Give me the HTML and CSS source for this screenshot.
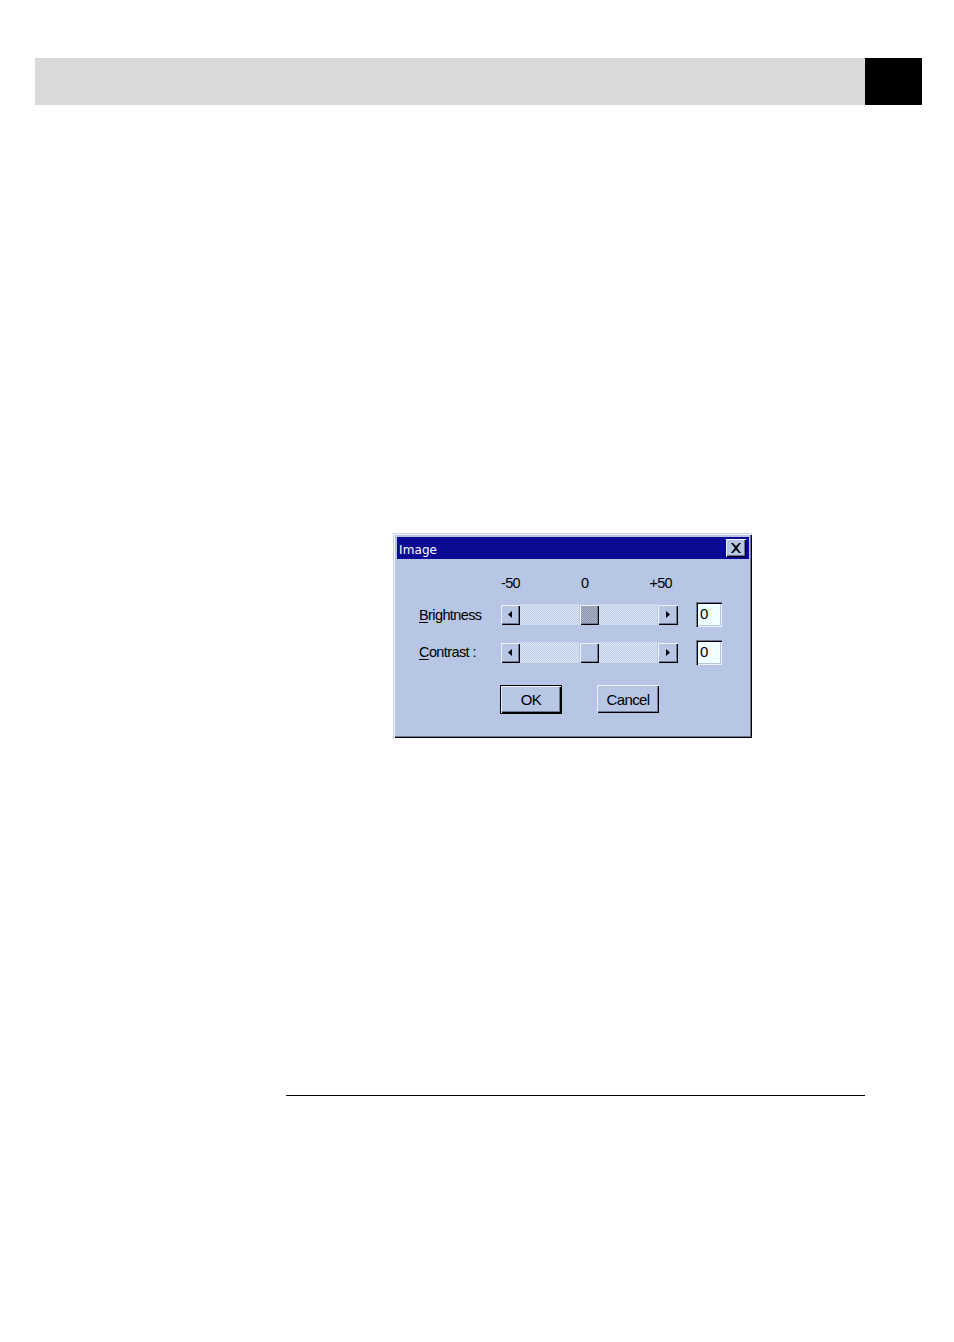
FILE: index.html
```html
<!DOCTYPE html>
<html>
<head>
<meta charset="utf-8">
<title>Image</title>
<link rel="stylesheet" href="styles.css">
</head>
<body>
<div class="page">
  <div class="header">
    <div class="header-gray"></div>
    <div class="header-black"></div>
  </div>

  <div class="dialog">
    <div class="titlebar">
      <span class="title">Image</span>
      <span class="close">
        <svg width="12" height="10" viewBox="0 0 12 10"><path d="M1 0h2l3 3.2L9 0h2L7.1 5 11 10H9L6 6.8 3 10H1l3.9-5z" fill="#000"/></svg>
      </span>
    </div>
    <div class="body">
      <div class="grid">
        <div></div>
        <div class="scale"><span>-50</span><span>0</span><span>+50</span></div>
        <div></div><div></div>

        <div class="label"><u>B</u>rightness</div>
        <div class="scroll">
          <span class="arrow"><svg width="4" height="7" viewBox="0 0 4 7"><path d="M4 0v7L0 3.5z" fill="#000"/></svg></span>
          <span class="track"></span>
          <span class="thumb focus"></span>
          <span class="track"></span>
          <span class="arrow"><svg width="4" height="7" viewBox="0 0 4 7"><path d="M0 0v7l4-3.5z" fill="#000"/></svg></span>
        </div>
        <div></div>
        <div class="edit">0</div>

        <div class="label"><u>C</u>ontrast :</div>
        <div class="scroll">
          <span class="arrow"><svg width="4" height="7" viewBox="0 0 4 7"><path d="M4 0v7L0 3.5z" fill="#000"/></svg></span>
          <span class="track"></span>
          <span class="thumb"></span>
          <span class="track"></span>
          <span class="arrow"><svg width="4" height="7" viewBox="0 0 4 7"><path d="M0 0v7l4-3.5z" fill="#000"/></svg></span>
        </div>
        <div></div>
        <div class="edit">0</div>
      </div>
      <div class="buttons">
        <div class="btn default">OK</div>
        <div class="btn">Cancel</div>
      </div>
    </div>
  </div>

  <div class="rule"></div>
</div>
</body>
</html>
```

FILE: styles.css
```css
html, body {
  margin: 0;
  padding: 0;
  background: #fff;
}
.page {
  padding-top: 58px;
  font-family: "Liberation Sans", Arial, sans-serif;
}
.header {
  display: flex;
  margin-left: 35px;
  height: 47px;
}
.header-gray {
  width: 830px;
  background: #d9d9d9;
}
.header-black {
  width: 57px;
  background: #000;
}

.dialog {
  box-sizing: border-box;
  margin-top: 428px;
  margin-left: 393px;
  width: 359px;
  height: 205px;
  padding: 4px 3px 4px 4px;
  background: #b7c6e4;
  box-shadow: inset 1px 1px 0 #c9d5ec, inset 2px 2px 0 #eef2fb,
              inset -1px -1px 0 #000, inset -2px -2px 0 #6f7a92;
}
.titlebar {
  height: 22px;
  background: #0b0b96;
  display: flex;
  align-items: center;
  justify-content: space-between;
  padding: 0 3px 0 2px;
}
.title {
  color: #fff;
  font-family: "DejaVu Sans", Verdana, sans-serif;
  font-size: 12px;
  letter-spacing: 0.1px;
  padding-top: 3px;
}
.close {
  box-sizing: border-box;
  width: 20px;
  height: 18px;
  background: #b7c6e4;
  display: flex;
  align-items: center;
  justify-content: center;
  box-shadow: inset 1px 1px 0 #eef2fb, inset -1px -1px 0 #000, inset -2px -2px 0 #6f7a92;
}

.body {
  padding: 16px 0 0 22px;
}
.grid {
  display: grid;
  grid-template-columns: 81px 178px 18px 26px;
  grid-template-rows: 16px 25px 25px;
  row-gap: 11px;
  align-items: center;
  font-size: 14.5px;
  color: #000;
}
.grid > :nth-child(n+9) { margin-top: 3px; }
.scale {
  display: flex;
  justify-content: space-between;
  padding: 0 6px 0 1px;
  letter-spacing: -0.7px;
}
.label {
  letter-spacing: -0.6px;
}
.label u {
  text-decoration-thickness: 1px;
  text-underline-offset: 2px;
}
.scroll {
  display: flex;
  height: 21px;
}
.arrow, .thumb {
  box-sizing: border-box;
  width: 20px;
  height: 21px;
  flex: none;
  background: #b7c6e4;
  display: flex;
  align-items: center;
  justify-content: center;
  box-shadow: inset 1px 1px 0 #b7c6e4, inset 2px 2px 0 #eef2fb,
              inset -1px -1px 0 #000, inset -2px -2px 0 #6f7a92;
}
.arrow:last-child {
  width: 21px;
}
.thumb.focus {
  background: repeating-conic-gradient(#8d97ac 0 25%, #a9b3c8 0 50%) 0 0 / 2px 2px;
}
.track {
  flex: 1;
  background: repeating-conic-gradient(#dbe6f4 0 25%, #bfcde8 0 50%) 0 0 / 2px 2px;
}
.edit {
  box-sizing: border-box;
  height: 25px;
  width: 26px;
  background: #f0ffff;
  padding: 3px 0 0 4px;
  font-size: 15px;
  box-shadow: inset 1px 1px 0 #6f7a92, inset 2px 2px 0 #000,
              inset -1px -1px 0 #eef2fb, inset -2px -2px 0 #b7c6e4;
  line-height: 18px;
}

.buttons {
  display: flex;
  gap: 35px;
  margin: 22px 0 0 81px;
}
.btn {
  box-sizing: border-box;
  width: 62px;
  height: 28px;
  display: flex;
  align-items: center;
  justify-content: center;
  font-size: 15px;
  letter-spacing: -0.6px;
  background: #b7c6e4;
  box-shadow: inset 1px 1px 0 #eef2fb, inset -1px -1px 0 #000, inset -2px -2px 0 #6f7a92;
}
.btn.default {
  height: 29px;
  box-shadow: inset 0 0 0 1px #000, inset 2px 2px 0 #eef2fb,
              inset -2px -2px 0 #000, inset -3px -3px 0 #6f7a92;
}

.rule {
  margin-top: 357px;
  margin-left: 286px;
  width: 579px;
  border-top: 1px solid #000;
}
```
